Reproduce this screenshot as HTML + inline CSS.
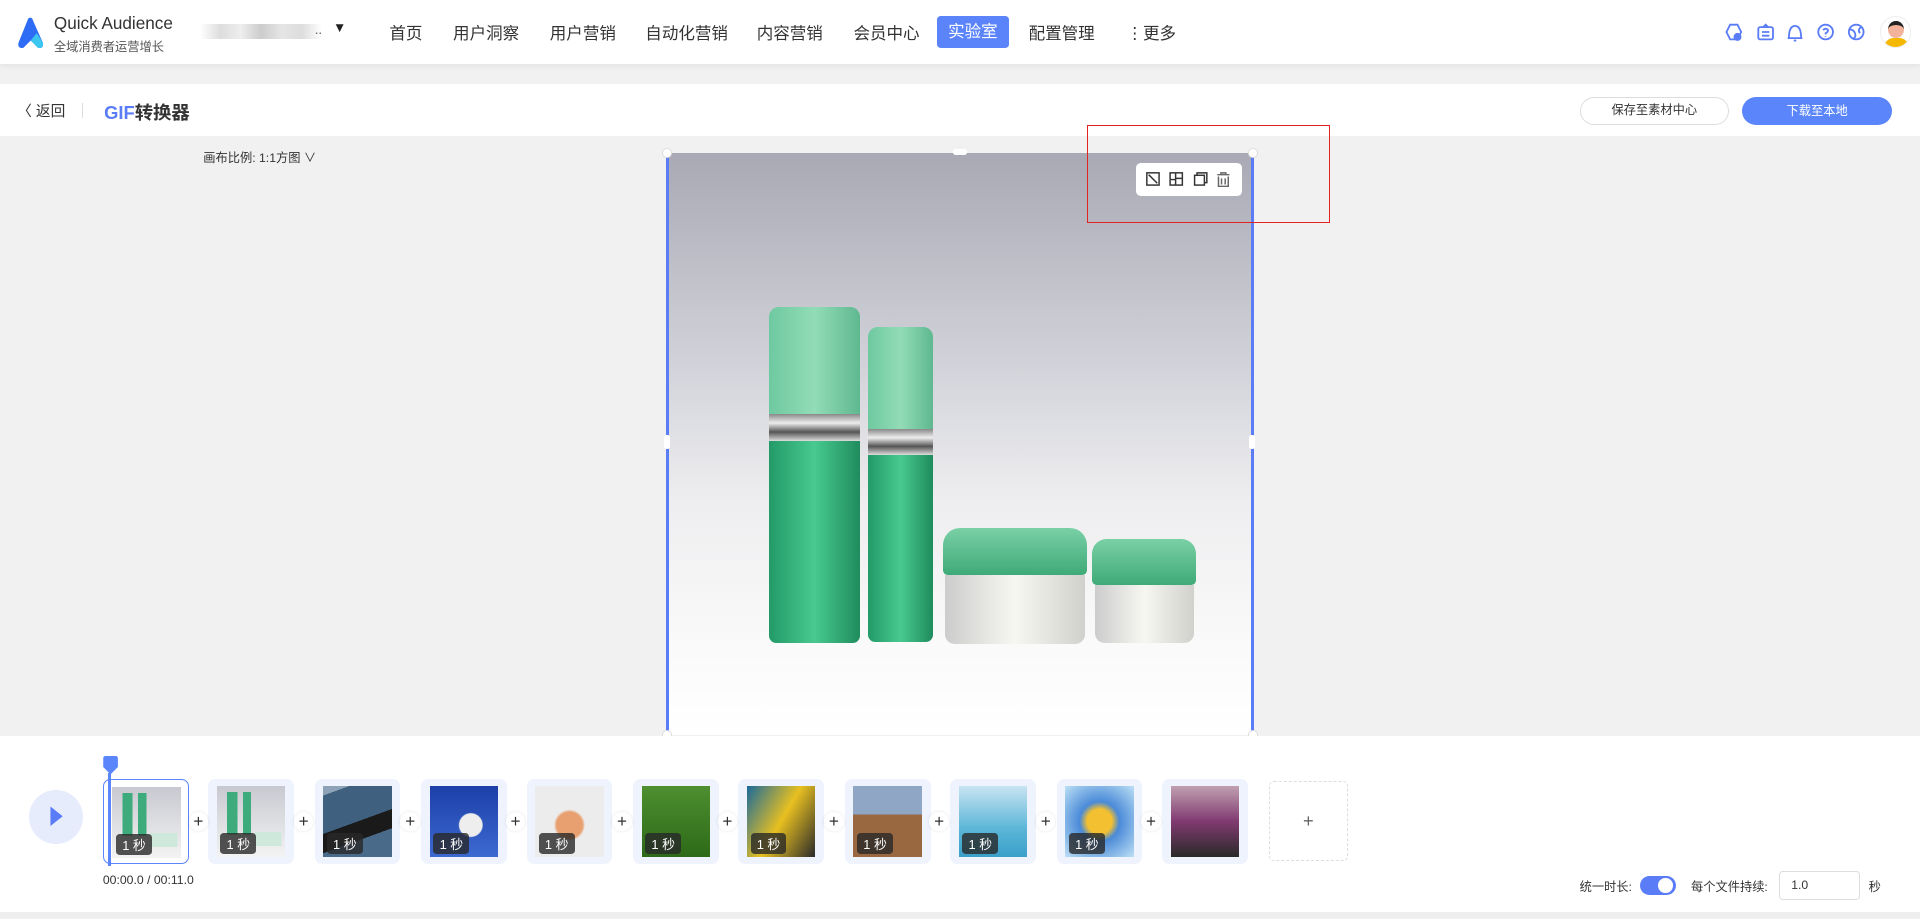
<!DOCTYPE html>
<html><head><meta charset="utf-8"><style>
*{box-sizing:border-box;margin:0;padding:0}
html,body{width:1920px;height:919px;overflow:hidden;background:#f1f1f1}
#z{zoom:1.22449;width:1568px;height:751px;position:relative;font-family:"Liberation Sans","Noto Sans CJK SC",sans-serif;color:#333}
.a{position:absolute}
.nav{top:16px;font-size:13.5px;color:#333;white-space:nowrap}
.th{width:70px;height:70px;top:636px;background:#eef3fd;border-radius:6px}
.th .im{position:absolute;left:7px;top:6px;width:56px;height:58px}
.th .lb{position:absolute;left:10px;top:44px;background:rgba(40,40,40,.8);color:#fff;font-size:10.5px;padding:1px 5px;border-radius:3px}
.pl{width:16px;height:16px;top:663px;border-radius:50%;background:#fff;font-size:14px;line-height:15px;text-align:center;color:#333;box-shadow:0 0 3px rgba(0,0,0,.1)}
.hd{width:8px;height:8px;border-radius:50%;background:#fff;border:1px solid #ddd}
.pr{background:linear-gradient(90deg,transparent 0 15%,#3dab7b 15% 30%,transparent 30% 38%,#3dab7b 38% 50%,transparent 50%) 0 20%/100% 60% no-repeat,linear-gradient(90deg,transparent 55%,#cfe8dc 55% 95%,transparent 95%) 0 80%/100% 20% no-repeat,linear-gradient(#c8c9d0,#f3f3f3)}
</style></head><body><div id="z">
<div class="a" style="left:0;top:0;width:1568px;height:52px;background:#fff;box-shadow:0 2px 4px rgba(0,0,0,.05)"></div>
<svg class="a" style="left:13px;top:13px" width="24" height="28" viewBox="0 0 24 28"><path d="M10 2 Q13 0 14 4 L22 22 Q23 27 18 26 L12 20 L6 26 Q1 27 2 22 Z" fill="#2f6cf6"/><path d="M12 20 L18 26 Q23 27 22 22 L17 14 Z" fill="#3bc7f0"/></svg>
<div class="a" style="left:44px;top:11px;font-size:14px;color:#333">Quick Audience</div>
<div class="a" style="left:44px;top:30px;font-size:10px;color:#555">全域消费者运营增长</div>
<div class="a" style="left:163px;top:20px;width:100px;height:12px;background:linear-gradient(90deg,#fff,#ddd,#eee,#ccc,#e5e5e5,#ddd,#fff)"></div>
<div class="a" style="left:257px;top:18px;font-size:11px;color:#666">..</div>
<div class="a" style="left:272px;top:16px;font-size:11px;color:#222">▼</div>
<div class="a nav" style="left:318px">首页</div>
<div class="a nav" style="left:370px">用户洞察</div>
<div class="a nav" style="left:449px">用户营销</div>
<div class="a nav" style="left:527px">自动化营销</div>
<div class="a nav" style="left:618px">内容营销</div>
<div class="a nav" style="left:697px">会员中心</div>
<div class="a" style="left:765px;top:13px;width:59px;height:26px;background:#5b84fb;border-radius:3px;color:#fff;font-size:13.5px;text-align:center;line-height:26px">实验室</div>
<div class="a nav" style="left:840px">配置管理</div>
<div class="a nav" style="left:920px">⋮更多</div>
<svg class="a" style="left:1408px;top:17px" width="120" height="18" viewBox="0 0 120 18" fill="none" stroke="#5b7cf7" stroke-width="1.5"><path d="M5 3 L11 3 L14 9 L11 15 L5 15 L2 9 Z"/><circle cx="11" cy="13" r="2.5" fill="#5b7cf7"/><rect x="28" y="5" width="12" height="10" rx="1.5"/><path d="M31 9h6M31 12h6M32 5 L34 3 L36 5"/><path d="M53 14 Q53 4 58 4 Q63 4 63 14 Z M52 14h12M57 16h2"/><circle cx="83" cy="9" r="6"/><path d="M81 7.5 Q83 5 85 7.5 Q85 9 83 10v1M83 12.5v.5"/><circle cx="108" cy="9" r="6"/><path d="M103 7 Q106 7 107 10 Q108 13 106 14M112 5 Q109 7 111 10"/></svg>
<div class="a" style="left:1535px;top:13px;width:26px;height:26px;border-radius:50%;background:#fff;border:1px solid #eee;overflow:hidden"><div class="a" style="left:6px;top:3px;width:13px;height:14px;border-radius:50%;background:#f3b39a;border-top:4px solid #222"></div><div class="a" style="left:3px;top:17px;width:20px;height:10px;border-radius:8px 8px 0 0;background:#f5b800"></div></div>
<div class="a" style="left:0;top:69px;width:1568px;height:42px;background:#fff"></div>
<div class="a" style="left:14px;top:82px;font-size:12px;color:#333">〈 返回</div>
<div class="a" style="left:67px;top:84px;width:1px;height:12px;background:#ddd"></div>
<div class="a" style="left:85px;top:81px;font-size:15px;font-weight:bold;color:#333"><span style="color:#5b7cf7">GIF</span>转换器</div>
<div class="a" style="left:1290px;top:79px;width:122px;height:23px;border:1px solid #ddd;border-radius:12px;font-size:10px;text-align:center;line-height:21px;background:#fff">保存至素材中心</div>
<div class="a" style="left:1423px;top:79px;width:122px;height:23px;background:#5b86fb;border-radius:12px;font-size:10px;text-align:center;line-height:23px;color:#fff">下载至本地</div>
<div class="a" style="left:166px;top:121px;font-size:10px;color:#333">画布比例: 1:1方图 ∨</div>
<div class="a" style="left:545px;top:125px;width:478px;height:475px;background:linear-gradient(180deg,#a8a9b4 0%,#d0d1d8 35%,#eeeef0 60%,#fafafa 85%,#fff 100%)">
 <div class="a" style="left:83px;top:126px;width:74px;height:88px;background:linear-gradient(90deg,#6ec9a0,#92dcb6,#5fb890);border-radius:8px 8px 0 0"></div>
 <div class="a" style="left:83px;top:213px;width:74px;height:22px;background:linear-gradient(180deg,#888,#eee,#555,#ddd)"></div>
 <div class="a" style="left:83px;top:235px;width:74px;height:165px;background:linear-gradient(90deg,#239a68,#48c98f,#1f8c5d);border-radius:0 0 6px 6px"></div>
 <div class="a" style="left:164px;top:142px;width:53px;height:83px;background:linear-gradient(90deg,#6ec9a0,#92dcb6,#5fb890);border-radius:8px 8px 0 0"></div>
 <div class="a" style="left:164px;top:225px;width:53px;height:22px;background:linear-gradient(180deg,#888,#eee,#555,#ddd)"></div>
 <div class="a" style="left:164px;top:247px;width:53px;height:152px;background:linear-gradient(90deg,#239a68,#48c98f,#1f8c5d);border-radius:0 0 6px 6px"></div>
 <div class="a" style="left:225px;top:306px;width:118px;height:39px;background:linear-gradient(180deg,#7ad0a6,#3faa78);border-radius:14px 14px 4px 4px"></div>
 <div class="a" style="left:227px;top:345px;width:114px;height:56px;background:linear-gradient(90deg,#ccc,#f7f7f2,#d0d0cc);border-radius:0 0 8px 8px"></div>
 <div class="a" style="left:347px;top:315px;width:85px;height:38px;background:linear-gradient(180deg,#7ad0a6,#3faa78);border-radius:12px 12px 4px 4px"></div>
 <div class="a" style="left:349px;top:353px;width:81px;height:47px;background:linear-gradient(90deg,#ccc,#f7f7f2,#d0d0cc);border-radius:0 0 8px 8px"></div>
</div>
<div class="a" style="left:544px;top:125px;width:2px;height:475px;background:#5b7cf7"></div>
<div class="a" style="left:1022px;top:125px;width:2px;height:475px;background:#5b7cf7"></div>
<div class="a hd" style="left:541px;top:121px"></div><div class="a hd" style="left:1019px;top:121px"></div>
<div class="a hd" style="left:541px;top:596px"></div><div class="a hd" style="left:1019px;top:596px"></div>
<div class="a" style="left:542px;top:355px;width:5px;height:12px;background:#fff;border-radius:2px"></div>
<div class="a" style="left:1020px;top:355px;width:5px;height:12px;background:#fff;border-radius:2px"></div>
<div class="a" style="left:778px;top:122px;width:12px;height:5px;background:#fff;border-radius:2px"></div>
<div class="a" style="left:928px;top:133px;width:86px;height:27px;background:#fff;border-radius:4px"></div>
<svg class="a" style="left:935px;top:140px" width="74" height="14" viewBox="0 0 74 14" fill="none" stroke="#333" stroke-width="1.2"><rect x="1.5" y="1.5" width="10" height="10"/><path d="M3 3l7 7" /><rect x="20.5" y="1.5" width="10" height="10"/><path d="M25 2v4h5M21 7h4v4"/><rect x="40.5" y="3.5" width="8" height="8"/><path d="M42.5 3.5v-2h8v8h-2"/><path d="M59 3h10M62 3V1.5h4V3M60 4.5v8h8v-8M62.5 6v5M65.5 6v5" stroke="#666"/></svg>
<div class="a" style="left:888px;top:102px;width:198px;height:80px;border:1.5px solid #e32222"></div>
<div class="a" style="left:0;top:601px;width:1568px;height:144px;background:#fff"></div>
<div class="a" style="left:24px;top:645px;width:44px;height:44px;border-radius:50%;background:#e6ecfb"></div>
<svg class="a" style="left:39px;top:657px" width="14" height="20"><path d="M2 2 L12 10 L2 18 Z" fill="#5b7cf7"/></svg>
<div class="a th" style="left:84px;background:#fff;border:1px solid #5b86fb"><div class="im pr"></div><div class="lb">1 秒</div></div>
<div class="a" style="left:88px;top:631px;width:3px;height:76px;background:#5b86fb"></div>
<svg class="a" style="left:83px;top:617px" width="14" height="16"><path d="M1 2 Q1 0 3 0 H11 Q13 0 13 2 V9 L7 15 L1 9 Z" fill="#5b86fb"/></svg>
<div class="a th" style="left:170px"><div class="im pr"></div><div class="lb">1 秒</div></div>
<div class="a th" style="left:257px"><div class="im" style="background:linear-gradient(160deg,#8fa3b8 0 10%,#40607f 10% 50%,#1a1a1a 50% 70%,#4a6a8a 70%)"></div><div class="lb">1 秒</div></div>
<div class="a th" style="left:344px"><div class="im" style="background:radial-gradient(circle at 60% 55%,#eee 0 20%,transparent 22%),linear-gradient(#1c3fa8,#3d6ad0)"></div><div class="lb">1 秒</div></div>
<div class="a th" style="left:430px"><div class="im" style="background:radial-gradient(circle at 50% 55%,#e8a070 0 25%,#ececec 30%)"></div><div class="lb">1 秒</div></div>
<div class="a th" style="left:517px"><div class="im" style="background:linear-gradient(#4e8f30,#2d6a18)"></div><div class="lb">1 秒</div></div>
<div class="a th" style="left:603px"><div class="im" style="background:linear-gradient(120deg,#1a6a9c,#e8c020 50%,#2a2a2a)"></div><div class="lb">1 秒</div></div>
<div class="a th" style="left:690px"><div class="im" style="background:linear-gradient(#8fa6c5 0 40%,#9a6840 40%)"></div><div class="lb">1 秒</div></div>
<div class="a th" style="left:776px"><div class="im" style="background:linear-gradient(#c8e4f2,#5bb6d8 60%,#3aa0c8)"></div><div class="lb">1 秒</div></div>
<div class="a th" style="left:863px"><div class="im" style="background:radial-gradient(circle at 50% 50%,#f2c030 0 25%,#4a8ad8 40%,#bde0f5)"></div><div class="lb">1 秒</div></div>
<div class="a th" style="left:949px"><div class="im" style="background:linear-gradient(#c0a0b0,#803a70 50%,#2a2a2a)"></div></div>
<div class="a" style="left:1036px;top:638px;width:65px;height:65px;border:1px dashed #ddd;border-radius:4px;text-align:center;line-height:63px;font-size:15px;color:#666">+</div>
<div class="a pl" style="left:154px">+</div><div class="a pl" style="left:240px">+</div><div class="a pl" style="left:327px">+</div><div class="a pl" style="left:413px">+</div><div class="a pl" style="left:500px">+</div><div class="a pl" style="left:586px">+</div><div class="a pl" style="left:673px">+</div><div class="a pl" style="left:759px">+</div><div class="a pl" style="left:846px">+</div><div class="a pl" style="left:932px">+</div>
<div class="a" style="left:84px;top:713px;font-size:10px;color:#333">00:00.0 / 00:11.0</div>
<div class="a" style="left:1290px;top:716px;font-size:10px;color:#333">统一时长:</div>
<div class="a" style="left:1339px;top:715px;width:30px;height:16px;border-radius:8px;background:#5b7cf7"><div class="a" style="left:15px;top:2px;width:12px;height:12px;border-radius:50%;background:#fff"></div></div>
<div class="a" style="left:1381px;top:716px;font-size:10px;color:#333">每个文件持续:</div>
<div class="a" style="left:1453px;top:711px;width:66px;height:24px;border:1px solid #ddd;border-radius:3px;font-size:10px;line-height:22px;padding-left:9px">1.0</div>
<div class="a" style="left:1526px;top:716px;font-size:10px;color:#333">秒</div>
<div class="a" style="left:0;top:745px;width:1568px;height:6px;background:#eee"></div>
</div></body></html>
